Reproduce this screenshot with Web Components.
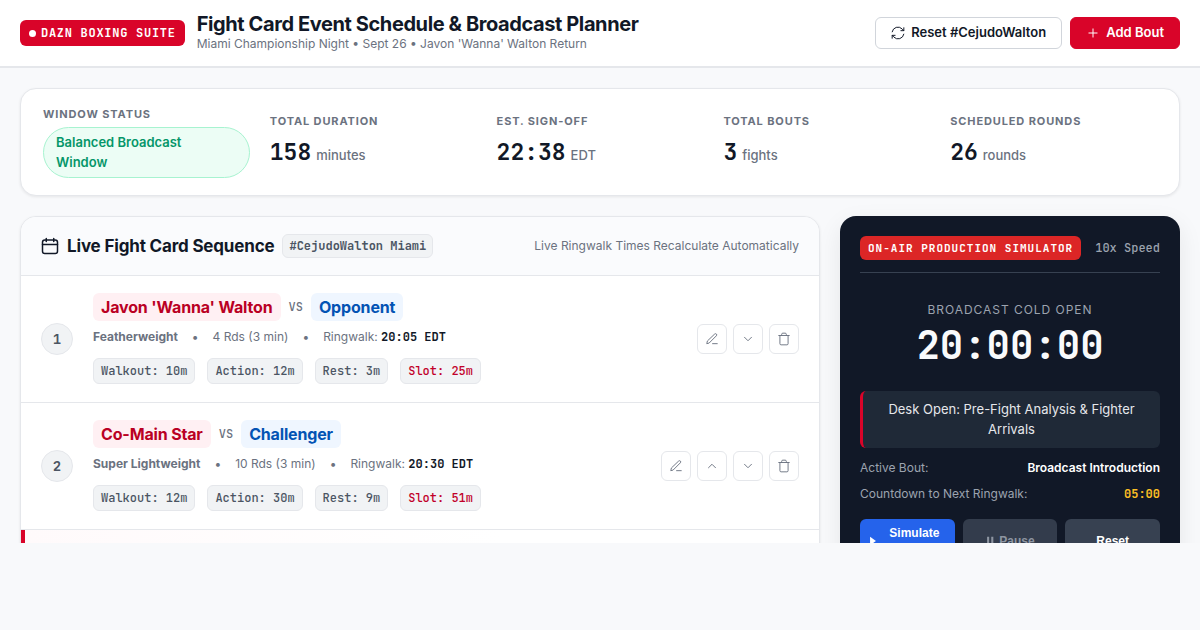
<!DOCTYPE html>
<html lang="en">
<head>
<meta charset="utf-8">
<meta name="viewport" content="width=device-width, initial-scale=1">
<title>Fight Card Event Schedule &amp; Broadcast Planner</title>
<style>
  :root {
    --red: #d90429;
    --ink: #111827;
    --muted: #6b7280;
    --line: #e5e7eb;
    --mono: "JetBrains Mono", "DejaVu Sans Mono", "Liberation Mono", monospace;
  }
  body {
    margin: 0;
    background: #f8f9fb;
    color: var(--ink);
    font: 400 13px/1.5 Inter, "Liberation Sans", sans-serif;
  }
</style>
</head>
<body>
<planner-app></planner-app>
<script>
const RESET = `*{box-sizing:border-box} button{font:inherit;cursor:pointer;margin:0}`;

function define(name, css, html) {
  customElements.define(name, class extends HTMLElement {
    constructor() {
      super();
      const root = this.attachShadow({ mode: "open" });
      const get = key => this.getAttribute(key) || "";
      root.innerHTML = `<style>${RESET}${css}</style>` + (typeof html === "function" ? html(get) : html);
    }
  });
}

const ICONS = {
  cycle: `<path d="M2 10A10 10 0 0 1 19 5L22 8M22 3v5h-5M22 14A10 10 0 0 1 5 19L2 16M2 21v-5h5"/>`,
  plus: `<path d="M12 5v14M5 12h14"/>`,
  calendar: `<rect x="2" y="4" width="20" height="18" rx="3"/><path d="M2 10h20M7 2v4M17 2v4"/>`,
  edit: `<path d="M13 20h8M16.500 3.500a2.100 2.100 0 0 1 3 3L7 19l-4 1 1-4z"/>`,
  up: `<path d="M6 15l6-6 6 6"/>`,
  down: `<path d="M6 9l6 6 6-6"/>`,
  trash: `<path d="M3 6h18M5 6v14a2 2 0 0 0 2 2h10a2 2 0 0 0 2-2V6M8 6V4a2 2 0 0 1 2-2h4a2 2 0 0 1 2 2v2"/>`,
  play: `<path d="M5 2l14 10-14 10z" fill="currentColor" stroke="none"/>`,
  pause: `<path d="M5 2h5v20H5zM15 2h5v20h-5z" fill="currentColor" stroke="none"/>`
};

define("ui-icon", `
  :host{display:block;flex:none;width:var(--size,14px);height:var(--size,14px)}
  svg{display:block;width:100%;height:100%;fill:none;stroke:currentColor;stroke-width:var(--stroke,2);stroke-linecap:round;stroke-linejoin:round}`,
  get => `<svg viewBox="0 0 24 24" aria-hidden="true">${ICONS[get("name")]}</svg>`);

define("suite-badge", `
  :host{display:flex;align-items:center;gap:5px;height:26px;padding:0 9px;border-radius:6px;background:var(--red);color:#fff;
    font:700 12px/18px var(--mono);letter-spacing:.06em;white-space:nowrap}
  i{width:7px;height:7px;border-radius:50%;background:#fff}`,
  `<i></i><slot></slot>`);

define("action-button", `
  :host{display:block;--stroke:1.7}
  button{display:flex;align-items:center;gap:6px;height:32px;padding:0 15px;border:1px solid #d1d5db;border-radius:6px;
    background:#fff;color:var(--ink);font-weight:600;white-space:nowrap}
  :host([primary]) button{background:var(--red);border-color:var(--red);color:#fff}`,
  get => `<button type="button"><ui-icon name="${get("icon")}"></ui-icon><slot></slot></button>`);

define("planner-header", `
  :host{display:flex;justify-content:space-between;align-items:center;gap:20px;height:68px;padding:0 20px;
    background:#fff;border-bottom:2px solid var(--line)}
  div{display:flex;align-items:center}
  .brand{gap:12px} .actions{gap:8px}
  section{padding-bottom:2px}
  h1{margin:0;font-size:20px;line-height:24px;font-weight:700;letter-spacing:-.02em}
  p{margin:0;font-size:12px;line-height:16px;color:var(--muted)}`,
  `<div class="brand"><suite-badge>DAZN BOXING SUITE</suite-badge>
    <section><h1>Fight Card Event Schedule &amp; Broadcast Planner</h1>
    <p>Miami Championship Night • Sept 26 • Javon 'Wanna' Walton Return</p></section></div>
   <div class="actions"><action-button icon="cycle">Reset #CejudoWalton</action-button>
    <action-button icon="plus" primary>Add Bout</action-button></div>`);

define("stat-item", `
  :host{display:flex;flex-direction:column;justify-content:center;gap:4px;min-width:0}
  h2{margin:0;font-size:11px;line-height:17px;font-weight:700;letter-spacing:.08em;text-transform:uppercase;color:var(--muted)}
  p{display:flex;align-items:baseline;gap:5px;margin:0;padding-top:1px;font-size:13px;line-height:34px;font-weight:500;color:var(--muted);white-space:nowrap}
  b{font:700 23px/34px var(--mono);color:var(--ink)}`,
  get => `<h2>${get("label")}</h2><slot><p><b>${get("value")}</b><span>${get("unit")}</span></p></slot>`);

define("status-pill", `
  :host{display:block;padding:5px 24px 5px 12px;border:1px solid #a7f3d0;border-radius:26px;background:#ecfdf5;color:#059669;font-weight:600}`,
  `<slot></slot>`);

define("stats-bar", `
  :host{display:grid;grid-template-columns:repeat(5,minmax(0,1fr));gap:20px;padding:17px 22px;background:#fff;
    border:1px solid var(--line);border-radius:16px;box-shadow:0 1px 3px rgba(0,0,0,.08)}`,
  `<stat-item label="Window Status"><status-pill>Balanced Broadcast Window</status-pill></stat-item>
   <stat-item label="Total Duration" value="158" unit="minutes"></stat-item>
   <stat-item label="Est. Sign-Off" value="22:38" unit="EDT"></stat-item>
   <stat-item label="Total Bouts" value="3" unit="fights"></stat-item>
   <stat-item label="Scheduled Rounds" value="26" unit="rounds"></stat-item>`);

define("icon-button", `
  :host{display:block;--stroke:1.6}
  button{display:grid;place-items:center;width:30px;height:30px;padding:0;border:1px solid var(--line);border-radius:6px;background:#fff;color:var(--muted)}`,
  get => `<button type="button" aria-label="${get("label")}"><ui-icon name="${get("icon")}"></ui-icon></button>`);

define("mono-chip", `
  :host{display:block;padding:3px 7px;border:1px solid var(--line);border-radius:6px;background:#f1f3f5;color:#4b5563;
    font:500 12px/18px var(--mono);white-space:nowrap}
  :host([accent]){color:#c1002a}
  :host([strong]){padding:2px 6px;font-weight:600}`,
  `<slot></slot>`);

define("bout-row", `
  :host{display:flex;align-items:center;gap:20px;min-height:127px;padding:16px 20px;border-bottom:1px solid var(--line)}
  :host([active]){background:linear-gradient(90deg,#fffafb,#fff 60%);border-left:4px solid var(--red);padding-left:16px}
  .num{flex:none;display:grid;place-items:center;width:32px;height:32px;border:1px solid var(--line);border-radius:50%;
    background:#f1f3f5;color:#4b5563;font:700 14px/18px var(--mono)}
  .info{flex:1;min-width:0;padding-bottom:2px}
  .names,.meta,.chips,.actions{display:flex;align-items:center}
  .names{gap:8px}
  .names b{padding:2px 8px;border-radius:6px;font-size:16px;font-weight:700;letter-spacing:-.01em}
  .a{background:#fff0f3;color:#ba0023}.b{background:#eff6ff;color:#0353b4}
  .vs{font:500 12px/18px var(--mono);color:var(--muted)}
  .meta{gap:14px;padding-top:7px;font-size:12px;line-height:18px;color:var(--muted)}
  .meta b{font-weight:700}
  .meta time{font:700 12px/18px var(--mono);color:var(--ink)}
  .chips{gap:12px;padding-top:12px}
  .actions{gap:6px}`,
  get => get("num") && `<div class="num">${get("num")}</div>
   <div class="info">
    <div class="names"><b class="a">${get("red")}</b><span class="vs">VS</span><b class="b">${get("blue")}</b></div>
    <div class="meta"><b>${get("division")}</b><span>•</span><span>${get("rounds")} Rds (3 min)</span><span>•</span><span>Ringwalk: <time>${get("time")} EDT</time></span></div>
    <div class="chips"><mono-chip>Walkout: ${get("walkout")}</mono-chip><mono-chip>Action: ${get("action")}</mono-chip><mono-chip>Rest: ${get("rest")}</mono-chip><mono-chip accent>Slot: ${get("slot-time")}</mono-chip></div>
   </div>
   <div class="actions"><icon-button icon="edit" label="Edit bout"></icon-button>${get("num") === "1" ? "" : `<icon-button icon="up" label="Move up"></icon-button>`}<icon-button icon="down" label="Move down"></icon-button><icon-button icon="trash" label="Delete bout"></icon-button></div>`);

define("fight-card", `
  :host{display:block;min-width:0;background:#fff;border:1px solid var(--line);border-radius:16px;overflow:hidden;box-shadow:0 1px 3px rgba(0,0,0,.08)}
  header{display:flex;justify-content:space-between;align-items:center;padding:17px 20px;background:#fafbfd;border-bottom:1px solid var(--line)}
  .title{display:flex;align-items:center;gap:8px}
  h2{margin:0;font-size:17px;line-height:24px;font-weight:700;letter-spacing:-.01em}
  ui-icon{--size:18px}
  p{margin:0;font-size:12px;line-height:18px;color:var(--muted)}`,
  `<header><div class="title"><ui-icon name="calendar"></ui-icon><h2>Live Fight Card Sequence</h2><mono-chip strong>#CejudoWalton Miami</mono-chip></div>
   <p>Live Ringwalk Times Recalculate Automatically</p></header>
   <bout-row num="1" red="Javon 'Wanna' Walton" blue="Opponent" division="Featherweight" rounds="4" time="20:05" walkout="10m" action="12m" rest="3m" slot-time="25m"></bout-row>
   <bout-row num="2" red="Co-Main Star" blue="Challenger" division="Super Lightweight" rounds="10" time="20:30" walkout="12m" action="30m" rest="9m" slot-time="51m"></bout-row>
   <bout-row active></bout-row>`);

define("sim-button", `
  :host{display:flex;min-width:0}
  button{flex:1;display:flex;align-items:center;justify-content:center;gap:4px;min-width:0;padding:7px 8px;border:0;border-radius:6px;
    background:#374151;color:#fff;font:600 12px/15px "Liberation Sans",sans-serif;text-align:center}
  :host([primary]) button{background:#2563eb}
  :host([primary]) span{flex:1}
  button:disabled{opacity:.9;color:#9ca3af}
  ui-icon{--size:10px}`,
  get => `<button type="button"${get("icon") === "pause" ? " disabled" : ""}>${get("icon") ? `<ui-icon name="${get("icon")}"></ui-icon>` : ""}<span><slot></slot></span></button>`);

define("broadcast-simulator", `
  :host{display:block;min-width:0;padding:20px;border-radius:16px;background:#111827;color:#f9fafb;box-shadow:0 8px 24px rgba(0,0,0,.08)}
  header{display:flex;justify-content:space-between;align-items:center;padding-bottom:12px;border-bottom:1px solid #374151;white-space:nowrap;
    font:500 12px/18px var(--mono);color:#9ca3af}
  header b{padding:3px 8px;border-radius:6px;background:#dc2626;color:#fff;font-size:11px;font-weight:700;letter-spacing:1px}
  .clock{padding:28px 0 22px;text-align:center}
  .clock h2{margin:0 0 2px;font-size:12px;line-height:18px;font-weight:400;letter-spacing:.08em;color:#9ca3af}
  .clock time{display:block;font:700 39px/48px var(--mono)}
  .cue{margin:0 0 11px;padding:9px 16px;border-left:3px solid var(--red);border-radius:6px;background:#1f2937;color:#e5e7eb;text-align:center}
  dl{display:grid;gap:8px;margin:0;font-size:12px;line-height:18px}
  dl div{display:flex;justify-content:space-between}
  dt{color:#9ca3af}
  dd{margin:0;font-weight:600;color:#fff}
  dd.next{font-family:var(--mono);color:#fbbf24}
  .controls{display:grid;grid-template-columns:repeat(3,minmax(0,1fr));gap:8px;padding-top:16px}`,
  `<header><b>ON-AIR PRODUCTION SIMULATOR</b><span>10x Speed</span></header>
   <div class="clock"><h2>BROADCAST COLD OPEN</h2><time>20:00:00</time></div>
   <p class="cue">Desk Open: Pre-Fight Analysis &amp; Fighter Arrivals</p>
   <dl><div><dt>Active Bout:</dt><dd>Broadcast Introduction</dd></div>
    <div><dt>Countdown to Next Ringwalk:</dt><dd class="next">05:00</dd></div></dl>
   <div class="controls"><sim-button icon="play" primary>Simulate Show</sim-button><sim-button icon="pause">Pause</sim-button><sim-button>Reset</sim-button></div>`);

define("planner-app", `
  :host{display:flex;flex-direction:column;height:100vh;padding-bottom:87px;box-sizing:border-box}
  planner-header{flex:none}
  main{flex:1;min-height:0;overflow:hidden;display:flex;flex-direction:column;gap:20px;padding:20px}
  stats-bar{flex:none}
  .columns{flex:none;display:grid;grid-template-columns:minmax(0,1fr) 340px;align-items:start;gap:20px}`,
  `<planner-header></planner-header>
   <main><stats-bar></stats-bar><div class="columns"><fight-card></fight-card><broadcast-simulator></broadcast-simulator></div></main>`);
</script>
</body>
</html>
